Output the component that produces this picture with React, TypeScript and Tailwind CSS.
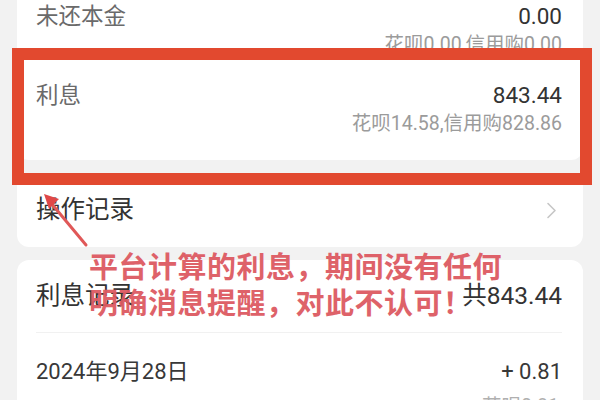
import React from 'react';

const font = { fontFamily: 'Roboto, "Noto Sans CJK SC", sans-serif' };

function AmountRow({ label, value, sub, dim }: { label: string; value: string; sub?: string; dim?: boolean }) {
  return (
    <div>
      <div className="flex h-[30px] items-center justify-between">
        <span className={`text-[22.5px] ${dim ? 'text-[#6a6a6a]' : 'text-[#333]'}`}>{label}</span>
        <span className="text-[22.5px] text-[#333]">{value}</span>
      </div>
      {sub && <p className="text-right text-[19.5px] leading-[26px] text-[#9b9b9b]">{sub}</p>}
    </div>
  );
}

function Chevron() {
  return (
    <svg width="11" height="17" viewBox="0 0 11 17" fill="none">
      <polyline points="2,1.5 9,8.5 2,15.5" stroke="#c6c6c6" strokeWidth="1.6" strokeLinecap="round" strokeLinejoin="round" />
    </svg>
  );
}

export default function App() {
  return (
    <div className="relative h-[400px] w-[600px] overflow-hidden bg-[#f2f2f2]" style={font}>
      {/* summary card */}
      <div className="mx-[17px] rounded-b-[12px] bg-white pb-[23px] pl-[19px] pr-[21px] pt-[2px]">
        <AmountRow label="未还本金" value="0.00" sub="花呗0.00,信用购0.00" dim />
        <div className="mt-[23px]">
          <AmountRow label="利息" value="843.44" sub="花呗14.58,信用购828.86" dim />
        </div>
      </div>

      {/* operation log */}
      <div className="mx-[17px] mt-[13px] flex h-[74px] items-center justify-between rounded-[12px] bg-white pl-[19px] pr-[26px] pt-[1px]">
        <span className="text-[24.5px] text-[#333]">操作记录</span>
        <Chevron />
      </div>

      {/* interest records */}
      <div className="mx-[17px] mt-[13px] rounded-t-[12px] bg-white pl-[19px] pr-[21px]">
        <div className="flex h-[73px] items-center justify-between border-b border-[#f1f1f1] pt-[1px]">
          <span className="text-[24.5px] text-[#333]">利息记录</span>
          <span className="text-[24.5px] text-[#333]">共843.44</span>
        </div>
        <div className="pt-[23px]">
          <div className="flex h-[30px] items-center justify-between">
            <span className="text-[22px] text-[#383838]">2024年9月28日</span>
            <span className="text-[22px] text-[#383838]">+ 0.81</span>
          </div>
          <p className="mt-[8px] pr-[3px] text-right text-[19.5px] leading-[26px] text-[#b0b0b0]">花呗0.81</p>
        </div>
      </div>

      {/* annotation: red frame */}
      <div className="absolute left-[12px] top-[48px] h-[137px] w-[580px] border-[12px] border-[#e2492f]" />

      {/* annotation: arrow */}
      <svg className="absolute left-0 top-0" width="600" height="400" viewBox="0 0 600 400">
        <line x1="86" y1="245" x2="51" y2="203" stroke="#e05858" strokeWidth="3" strokeLinecap="round" />
        <polygon points="44,194 59,199 49,209" fill="#e04848" />
      </svg>

      {/* annotation: caption */}
      <div className="absolute left-[89px] top-[250px] text-[29px] font-bold leading-[36px] tracking-[0.5px] text-[#dd5a62] opacity-95">
        <p>平台计算的利息，期间没有任何</p>
        <p>明确消息提醒，对此不认可！</p>
      </div>
    </div>
  );
}
